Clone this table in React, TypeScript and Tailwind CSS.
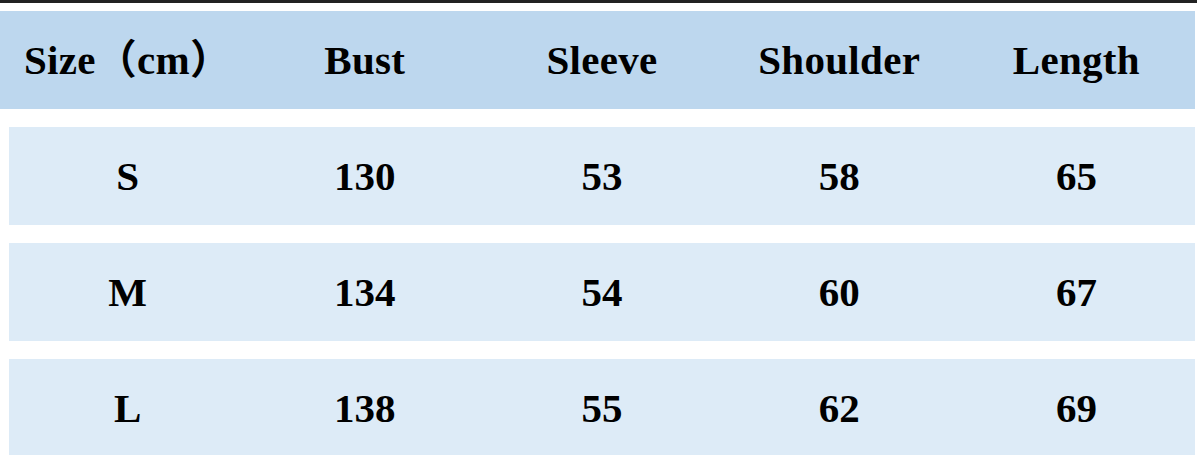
const headers = ["Size（cm）", "Bust", "Sleeve", "Shoulder", "Length"];

const rows = [
  ["S", "130", "53", "58", "65"],
  ["M", "134", "54", "60", "67"],
  ["L", "138", "55", "62", "69"],
];

export default function App() {
  return (
    <div
      className="w-[1197px] h-[455px] overflow-hidden bg-white text-black"
      style={{ fontFamily: '"Liberation Serif", "Noto Sans CJK SC", serif' }}
    >
      <div className="h-[3px] bg-[#222222]" />

      {/* Header */}
      <div className="mt-[8px] w-[1195px] h-[98px] bg-[#bdd7ee] pl-[9px]">
        <div className="grid grid-cols-5 h-full items-center">
          {headers.map((h) => (
            <div key={h} className="text-center text-[41px] font-bold leading-none tracking-[0.3px]">
              {h}
            </div>
          ))}
        </div>
      </div>

      {/* Rows */}
      <div className="mt-[18px] ml-[9px] w-[1186px] flex flex-col gap-[18px]">
        {rows.map((r) => (
          <div key={r[0]} className="h-[98px] bg-[#ddebf7] grid grid-cols-5 items-center">
            {r.map((c, i) => (
              <div key={i} className="text-center text-[41px] font-bold leading-none">
                {c}
              </div>
            ))}
          </div>
        ))}
      </div>
    </div>
  );
}
